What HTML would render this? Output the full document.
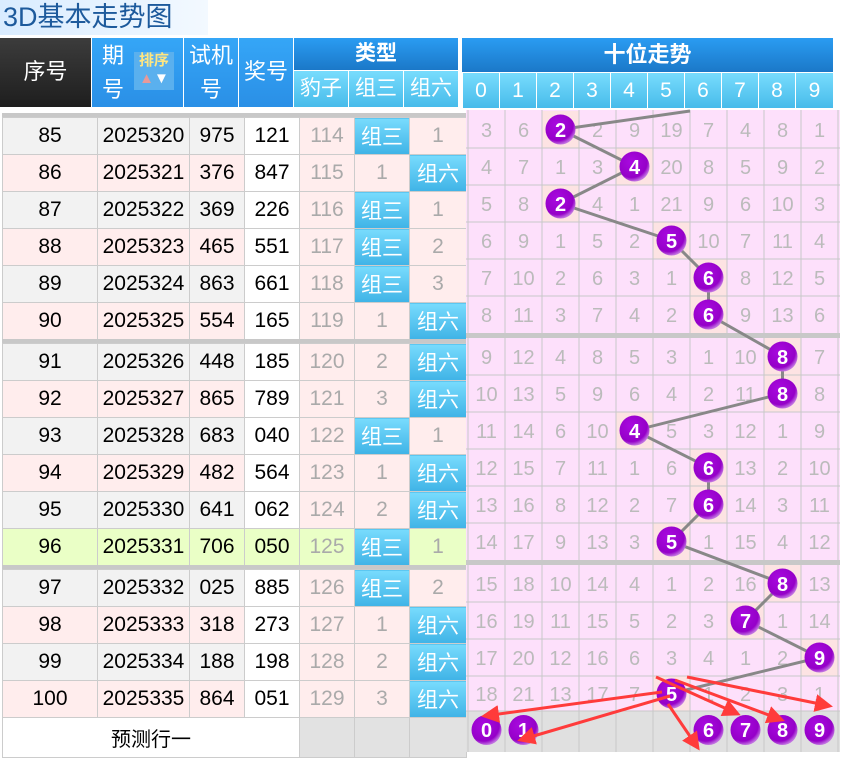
<!DOCTYPE html>
<html><head><meta charset="utf-8"><style>
*{margin:0;padding:0;box-sizing:border-box}
body{width:844px;height:752px;overflow:hidden;background:#fff;font-family:"Liberation Sans","Noto Sans CJK SC",sans-serif;position:relative}
.title{position:absolute;left:0;top:0;width:208px;height:35px;background:linear-gradient(to right,#d9ecff,#f3f9ff);color:#1d5a9c;font-size:27px;line-height:35px;padding-left:3px}
.h{position:absolute;color:#fff;font-size:21px;text-align:center;display:flex;align-items:center;justify-content:center;line-height:1.3}
.blue{background:linear-gradient(#35a6f7,#2a8fe6)}
.dblue{background:linear-gradient(#2a9cf2,#1b78c8)}
.cyan{background:linear-gradient(#78dcfd,#47bbea)}
.dark{background:linear-gradient(#3c3c3c,#1e1e1e)}
table{position:absolute;left:2px;border-collapse:collapse;table-layout:fixed;font-size:21px}
td{border:1px solid #ccc;height:37px;text-align:center;padding:0;color:#000;white-space:nowrap}
td.g{background:#f2f2f2}td.p{background:#ffeded}td.w{background:#fff}
td.gr{color:#aaa}
td.b{background:linear-gradient(#78dbfd,#3fb3e6);color:#fff}
tr.gn td{background:#eaffc6}
tr.gn td.b{background:linear-gradient(#78dbfd,#3fb3e6)}
.sep{position:absolute;left:2px;width:464px;height:4px;background:#c8c8c8}
svg{position:absolute;left:0;top:0}
</style></head><body>
<div class="title">3D基本走势图</div>
<div class="h dark" style="left:0;top:38px;width:91px;height:69px;font-size:22px">序号</div>
<div class="h blue" style="left:92px;top:38px;width:91px;height:69px;justify-content:flex-start;padding-left:10px;font-size:22px"><div style="width:22px;line-height:34px">期<br>号</div>
<div style="position:absolute;left:42px;top:14px;width:40px;height:38px;background:#5ab0ee;font-size:15px;line-height:18px;color:#ffe680;font-weight:bold">排序<br><span style="color:#e79a9a;font-size:15px">▲</span><span style="color:#fff;font-size:15px">▼</span></div></div>
<div class="h blue" style="left:184px;top:38px;width:54px;height:69px;line-height:34px;font-size:22px">试机<br>号</div>
<div class="h blue" style="left:239px;top:38px;width:54px;height:69px;font-size:22px">奖号</div>
<div class="h dblue" style="left:294px;top:38px;width:164px;height:32px;font-weight:bold">类型</div>
<div class="h cyan" style="left:294px;top:71px;width:54px;height:36px">豹子</div>
<div class="h cyan" style="left:349px;top:71px;width:54px;height:36px">组三</div>
<div class="h cyan" style="left:404px;top:71px;width:54px;height:36px">组六</div>
<div class="h dblue" style="left:462px;top:38px;width:371px;height:34px;font-weight:bold;font-size:22px">十位走势</div>
<div class="h cyan" style="left:463px;top:73px;width:36px;height:35px">0</div>
<div class="h cyan" style="left:500px;top:73px;width:36px;height:35px">1</div>
<div class="h cyan" style="left:537px;top:73px;width:36px;height:35px">2</div>
<div class="h cyan" style="left:574px;top:73px;width:36px;height:35px">3</div>
<div class="h cyan" style="left:611px;top:73px;width:36px;height:35px">4</div>
<div class="h cyan" style="left:648px;top:73px;width:36px;height:35px">5</div>
<div class="h cyan" style="left:685px;top:73px;width:36px;height:35px">6</div>
<div class="h cyan" style="left:722px;top:73px;width:36px;height:35px">7</div>
<div class="h cyan" style="left:759px;top:73px;width:36px;height:35px">8</div>
<div class="h cyan" style="left:796px;top:73px;width:37px;height:35px">9</div>

<div class="sep" style="top:113px"></div>
<table style="top:117px;width:464px">
<colgroup><col style="width:95px"><col style="width:92px"><col style="width:55px"><col style="width:55px"><col style="width:55px"><col style="width:55px"><col style="width:57px"></colgroup>
<tr><td class="g">85</td><td class="g">2025320</td><td class="g">975</td><td class="w">121</td><td class="p gr">114</td><td class="b">组三</td><td class="p gr">1</td></tr>
<tr><td class="p">86</td><td class="p">2025321</td><td class="p">376</td><td class="w">847</td><td class="p gr">115</td><td class="p gr">1</td><td class="b">组六</td></tr>
<tr><td class="g">87</td><td class="g">2025322</td><td class="g">369</td><td class="w">226</td><td class="p gr">116</td><td class="b">组三</td><td class="p gr">1</td></tr>
<tr><td class="p">88</td><td class="p">2025323</td><td class="p">465</td><td class="w">551</td><td class="p gr">117</td><td class="b">组三</td><td class="p gr">2</td></tr>
<tr><td class="g">89</td><td class="g">2025324</td><td class="g">863</td><td class="w">661</td><td class="p gr">118</td><td class="b">组三</td><td class="p gr">3</td></tr>
<tr><td class="p">90</td><td class="p">2025325</td><td class="p">554</td><td class="w">165</td><td class="p gr">119</td><td class="p gr">1</td><td class="b">组六</td></tr>
</table>
<div class="sep" style="top:339px"></div>
<table style="top:343px;width:464px">
<colgroup><col style="width:95px"><col style="width:92px"><col style="width:55px"><col style="width:55px"><col style="width:55px"><col style="width:55px"><col style="width:57px"></colgroup>
<tr><td class="g">91</td><td class="g">2025326</td><td class="g">448</td><td class="w">185</td><td class="p gr">120</td><td class="p gr">2</td><td class="b">组六</td></tr>
<tr><td class="p">92</td><td class="p">2025327</td><td class="p">865</td><td class="w">789</td><td class="p gr">121</td><td class="p gr">3</td><td class="b">组六</td></tr>
<tr><td class="g">93</td><td class="g">2025328</td><td class="g">683</td><td class="w">040</td><td class="p gr">122</td><td class="b">组三</td><td class="p gr">1</td></tr>
<tr><td class="p">94</td><td class="p">2025329</td><td class="p">482</td><td class="w">564</td><td class="p gr">123</td><td class="p gr">1</td><td class="b">组六</td></tr>
<tr><td class="g">95</td><td class="g">2025330</td><td class="g">641</td><td class="w">062</td><td class="p gr">124</td><td class="p gr">2</td><td class="b">组六</td></tr>
<tr class="gn"><td>96</td><td>2025331</td><td>706</td><td>050</td><td class="gr">125</td><td class="b">组三</td><td class="gr">1</td></tr>
</table>
<div class="sep" style="top:565px"></div>
<table style="top:569px;width:464px">
<colgroup><col style="width:95px"><col style="width:92px"><col style="width:55px"><col style="width:55px"><col style="width:55px"><col style="width:55px"><col style="width:57px"></colgroup>
<tr><td class="g">97</td><td class="g">2025332</td><td class="g">025</td><td class="w">885</td><td class="p gr">126</td><td class="b">组三</td><td class="p gr">2</td></tr>
<tr><td class="p">98</td><td class="p">2025333</td><td class="p">318</td><td class="w">273</td><td class="p gr">127</td><td class="p gr">1</td><td class="b">组六</td></tr>
<tr><td class="g">99</td><td class="g">2025334</td><td class="g">188</td><td class="w">198</td><td class="p gr">128</td><td class="p gr">2</td><td class="b">组六</td></tr>
<tr><td class="p">100</td><td class="p">2025335</td><td class="p">864</td><td class="w">051</td><td class="p gr">129</td><td class="p gr">3</td><td class="b">组六</td></tr>
<tr><td colspan="4" class="w" style="font-size:20px;height:40px">预测行一</td><td style="background:#e2e2e2"></td><td style="background:#e2e2e2"></td><td style="background:#e2e2e2"></td></tr>
</table>

<svg width="844" height="752" viewBox="0 0 844 752" font-family="Liberation Sans, sans-serif">
<defs>
<radialGradient id="bg" cx="40%" cy="35%" r="65%"><stop offset="0" stop-color="#a90ae0"/><stop offset="0.8" stop-color="#9500c8"/><stop offset="1" stop-color="#c070e0"/></radialGradient>
<marker id="ar" markerWidth="6" markerHeight="6" refX="5" refY="3" orient="auto" markerUnits="strokeWidth"><path d="M0,0 L6,3 L0,6 Z" fill="#ff3b3b"/></marker>
</defs>
<rect x="466" y="110" width="374" height="224" fill="#fde0fb"/>
<rect x="466" y="338" width="374" height="223" fill="#fde0fb"/>
<rect x="466" y="565" width="374" height="146" fill="#fde0fb"/>
<rect x="466" y="711" width="374" height="41" fill="#e0e0e0"/>
<rect x="466" y="333" width="374" height="5" fill="#c8c8c8"/>
<rect x="466" y="560" width="374" height="5" fill="#c8c8c8"/>
<g fill="#fde3e3">
<rect x="542" y="111" width="37" height="37"/><rect x="616" y="148" width="37" height="37"/><rect x="542" y="185" width="37" height="37"/><rect x="653" y="222" width="37" height="37"/><rect x="690" y="259" width="37" height="37"/><rect x="690" y="296" width="37" height="37"/>
<rect x="764" y="338" width="37" height="37"/><rect x="764" y="375" width="37" height="37"/><rect x="616" y="412" width="37" height="37"/><rect x="690" y="449" width="37" height="37"/><rect x="690" y="486" width="37" height="37"/><rect x="653" y="523" width="37" height="37"/>
<rect x="764" y="565" width="37" height="37"/><rect x="727" y="602" width="37" height="37"/><rect x="801" y="639" width="37" height="37"/><rect x="653" y="676" width="37" height="35"/>
</g>
<g stroke="#c8c8c8" stroke-width="1" fill="none">
<path d="M468 110V752M505 110V752M542 110V752M579 110V752M616 110V752M653 110V752M690 110V752M727 110V752M764 110V752M801 110V752M838 110V752"/>
<path d="M466 148H840M466 185H840M466 222H840M466 259H840M466 296H840M466 375H840M466 412H840M466 449H840M466 486H840M466 523H840M466 602H840M466 639H840M466 676H840M466 711H840"/>
</g>
<g fill="#bbb" font-size="20" text-anchor="middle">
<text y="137"><tspan x="486.5">3</tspan><tspan x="523.5">6</tspan><tspan x="597.5">2</tspan><tspan x="634.5">9</tspan><tspan x="671.5">19</tspan><tspan x="708.5">7</tspan><tspan x="745.5">4</tspan><tspan x="782.5">8</tspan><tspan x="819.5">1</tspan></text>
<text y="174"><tspan x="486.5">4</tspan><tspan x="523.5">7</tspan><tspan x="560.5">1</tspan><tspan x="597.5">3</tspan><tspan x="671.5">20</tspan><tspan x="708.5">8</tspan><tspan x="745.5">5</tspan><tspan x="782.5">9</tspan><tspan x="819.5">2</tspan></text>
<text y="211"><tspan x="486.5">5</tspan><tspan x="523.5">8</tspan><tspan x="597.5">4</tspan><tspan x="634.5">1</tspan><tspan x="671.5">21</tspan><tspan x="708.5">9</tspan><tspan x="745.5">6</tspan><tspan x="782.5">10</tspan><tspan x="819.5">3</tspan></text>
<text y="248"><tspan x="486.5">6</tspan><tspan x="523.5">9</tspan><tspan x="560.5">1</tspan><tspan x="597.5">5</tspan><tspan x="634.5">2</tspan><tspan x="708.5">10</tspan><tspan x="745.5">7</tspan><tspan x="782.5">11</tspan><tspan x="819.5">4</tspan></text>
<text y="285"><tspan x="486.5">7</tspan><tspan x="523.5">10</tspan><tspan x="560.5">2</tspan><tspan x="597.5">6</tspan><tspan x="634.5">3</tspan><tspan x="671.5">1</tspan><tspan x="745.5">8</tspan><tspan x="782.5">12</tspan><tspan x="819.5">5</tspan></text>
<text y="322"><tspan x="486.5">8</tspan><tspan x="523.5">11</tspan><tspan x="560.5">3</tspan><tspan x="597.5">7</tspan><tspan x="634.5">4</tspan><tspan x="671.5">2</tspan><tspan x="745.5">9</tspan><tspan x="782.5">13</tspan><tspan x="819.5">6</tspan></text>
<text y="364"><tspan x="486.5">9</tspan><tspan x="523.5">12</tspan><tspan x="560.5">4</tspan><tspan x="597.5">8</tspan><tspan x="634.5">5</tspan><tspan x="671.5">3</tspan><tspan x="708.5">1</tspan><tspan x="745.5">10</tspan><tspan x="819.5">7</tspan></text>
<text y="401"><tspan x="486.5">10</tspan><tspan x="523.5">13</tspan><tspan x="560.5">5</tspan><tspan x="597.5">9</tspan><tspan x="634.5">6</tspan><tspan x="671.5">4</tspan><tspan x="708.5">2</tspan><tspan x="745.5">11</tspan><tspan x="819.5">8</tspan></text>
<text y="438"><tspan x="486.5">11</tspan><tspan x="523.5">14</tspan><tspan x="560.5">6</tspan><tspan x="597.5">10</tspan><tspan x="671.5">5</tspan><tspan x="708.5">3</tspan><tspan x="745.5">12</tspan><tspan x="782.5">1</tspan><tspan x="819.5">9</tspan></text>
<text y="475"><tspan x="486.5">12</tspan><tspan x="523.5">15</tspan><tspan x="560.5">7</tspan><tspan x="597.5">11</tspan><tspan x="634.5">1</tspan><tspan x="671.5">6</tspan><tspan x="745.5">13</tspan><tspan x="782.5">2</tspan><tspan x="819.5">10</tspan></text>
<text y="512"><tspan x="486.5">13</tspan><tspan x="523.5">16</tspan><tspan x="560.5">8</tspan><tspan x="597.5">12</tspan><tspan x="634.5">2</tspan><tspan x="671.5">7</tspan><tspan x="745.5">14</tspan><tspan x="782.5">3</tspan><tspan x="819.5">11</tspan></text>
<text y="549"><tspan x="486.5">14</tspan><tspan x="523.5">17</tspan><tspan x="560.5">9</tspan><tspan x="597.5">13</tspan><tspan x="634.5">3</tspan><tspan x="708.5">1</tspan><tspan x="745.5">15</tspan><tspan x="782.5">4</tspan><tspan x="819.5">12</tspan></text>
<text y="591"><tspan x="486.5">15</tspan><tspan x="523.5">18</tspan><tspan x="560.5">10</tspan><tspan x="597.5">14</tspan><tspan x="634.5">4</tspan><tspan x="671.5">1</tspan><tspan x="708.5">2</tspan><tspan x="745.5">16</tspan><tspan x="819.5">13</tspan></text>
<text y="628"><tspan x="486.5">16</tspan><tspan x="523.5">19</tspan><tspan x="560.5">11</tspan><tspan x="597.5">15</tspan><tspan x="634.5">5</tspan><tspan x="671.5">2</tspan><tspan x="708.5">3</tspan><tspan x="782.5">1</tspan><tspan x="819.5">14</tspan></text>
<text y="665"><tspan x="486.5">17</tspan><tspan x="523.5">20</tspan><tspan x="560.5">12</tspan><tspan x="597.5">16</tspan><tspan x="634.5">6</tspan><tspan x="671.5">3</tspan><tspan x="708.5">4</tspan><tspan x="745.5">1</tspan><tspan x="782.5">2</tspan></text>
<text y="701"><tspan x="486.5">18</tspan><tspan x="523.5">21</tspan><tspan x="560.5">13</tspan><tspan x="597.5">17</tspan><tspan x="634.5">7</tspan><tspan x="708.5">1</tspan><tspan x="745.5">2</tspan><tspan x="782.5">3</tspan><tspan x="819.5">1</tspan></text>
</g>
<polyline fill="none" stroke="#888" stroke-width="3" points="690,111 560.5,129.5 634.5,166.5 560.5,203.5 671.5,240.5 708.5,277.5 708.5,314.5 782.5,356.5 782.5,393.5 634.5,430.5 708.5,467.5 708.5,504.5 671.5,541.5 782.5,583.5 745.5,620.5 819.5,657.5 671.5,693.5"/>
<g fill="url(#bg)">
<circle cx="560.5" cy="129.5" r="15"/><circle cx="634.5" cy="166.5" r="15"/><circle cx="560.5" cy="203.5" r="15"/><circle cx="671.5" cy="240.5" r="15"/><circle cx="708.5" cy="277.5" r="15"/><circle cx="708.5" cy="314.5" r="15"/>
<circle cx="782.5" cy="356.5" r="15"/><circle cx="782.5" cy="393.5" r="15"/><circle cx="634.5" cy="430.5" r="15"/><circle cx="708.5" cy="467.5" r="15"/><circle cx="708.5" cy="504.5" r="15"/><circle cx="671.5" cy="541.5" r="15"/>
<circle cx="782.5" cy="583.5" r="15"/><circle cx="745.5" cy="620.5" r="15"/><circle cx="819.5" cy="657.5" r="15"/><circle cx="671.5" cy="693.5" r="15"/>
<circle cx="486.5" cy="730" r="15"/><circle cx="523.5" cy="730" r="15"/><circle cx="708.5" cy="730" r="15"/><circle cx="745.5" cy="730" r="15"/><circle cx="782.5" cy="730" r="15"/><circle cx="819.5" cy="730" r="15"/>
</g>
<g fill="#fff" font-size="20" font-weight="bold" text-anchor="middle">
<text x="560.5" y="137">2</text><text x="634.5" y="174">4</text><text x="560.5" y="211">2</text><text x="671.5" y="248">5</text><text x="708.5" y="285">6</text><text x="708.5" y="322">6</text>
<text x="782.5" y="364">8</text><text x="782.5" y="401">8</text><text x="634.5" y="438">4</text><text x="708.5" y="475">6</text><text x="708.5" y="512">6</text><text x="671.5" y="549">5</text>
<text x="782.5" y="591">8</text><text x="745.5" y="628">7</text><text x="819.5" y="665">9</text><text x="671.5" y="701">5</text>
<text x="486.5" y="737">0</text><text x="523.5" y="737">1</text><text x="708.5" y="737">6</text><text x="745.5" y="737">7</text><text x="782.5" y="737">8</text><text x="819.5" y="737">9</text>
</g>
<g stroke="#ff3b3b" stroke-width="3" fill="none" marker-end="url(#ar)">
<line x1="662" y1="692" x2="484" y2="716"/>
<line x1="670" y1="696" x2="520" y2="740"/>
<line x1="668" y1="704" x2="698" y2="748"/>
<line x1="656" y1="677" x2="738" y2="714"/>
<line x1="675" y1="680" x2="782" y2="720"/>
<line x1="687" y1="677" x2="830" y2="706"/>
</g>
</svg>
</body></html>
